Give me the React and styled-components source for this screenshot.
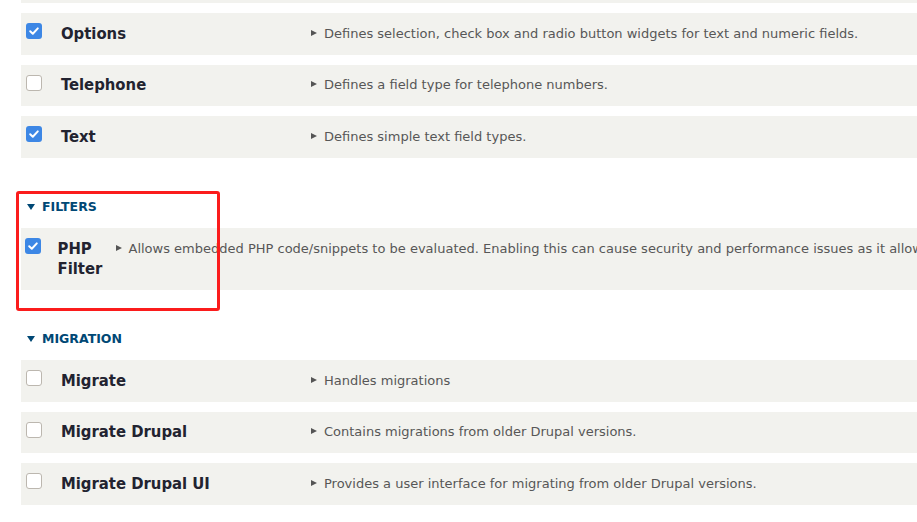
import React from 'react';
import styled, { createGlobalStyle } from 'styled-components';

const GlobalStyle = createGlobalStyle`
  html, body {
    margin: 0;
    padding: 0;
    background: #fff;
  }
  body {
    font-family: "DejaVu Sans", Verdana, sans-serif;
    overflow: hidden;
  }
`;

const Page = styled.div`
  position: relative;
  height: 522px;
  overflow: hidden;
`;

// list is scrolled: the row above "Options" only shows its last 2px
const List = styled.div`
  display: flex;
  flex-direction: column;
  margin-top: -38.5px;
  padding-left: 21px;
`;

const Section = styled.section`
  margin-top: 29px;
`;

const Heading = styled.h3`
  display: flex;
  align-items: center;
  margin: 0 0 11.5px;
  padding-left: 6px;
  font-size: 12.5px;
  line-height: 20px;
  font-weight: bold;
  text-transform: uppercase;
  color: #004875;

  &::before {
    content: '';
    width: 0;
    height: 0;
    margin-right: 7px;
    border-top: 6px solid #004875;
    border-left: 4px solid transparent;
    border-right: 4px solid transparent;
  }
`;

const Row = styled.div`
  display: flex;
  align-items: flex-start;
  box-sizing: border-box;
  min-height: 41.5px;
  background: #f2f2ee;
  padding: 10.5px 0 11px ${p => (p.$compact ? '4px' : '5px')};
  margin-bottom: 10px;
  overflow: hidden;
`;

const Box = styled.span`
  flex: none;
  box-sizing: border-box;
  width: 16px;
  height: 16px;
  margin-top: -0.5px;
  border-radius: 3px;
  display: flex;
  align-items: center;
  justify-content: center;
  background: ${p => (p.$checked ? '#3d87e5' : '#fff')};
  border: ${p => (p.$checked ? 'none' : '1px solid #bcb7af')};
`;

const Name = styled.div`
  flex: none;
  width: ${p => (p.$compact ? '58px' : '250px')};
  margin-left: ${p => (p.$compact ? '16.5px' : '19px')};
  font-family: "DejaVu Sans Condensed", "DejaVu Sans", sans-serif;
  font-size: 16.5px;
  line-height: 20px;
  font-weight: bold;
  color: #222330;
`;

const Desc = styled.div`
  display: flex;
  align-items: flex-start;
  font-size: 13px;
  line-height: 20px;
  color: #575757;
  white-space: nowrap;
`;

const Arrow = styled.span`
  flex: none;
  width: 0;
  height: 0;
  margin: 6px 7px 0 0;
  border-left: 6px solid #555;
  border-top: 3.5px solid transparent;
  border-bottom: 3.5px solid transparent;
`;

const Callout = styled.div`
  position: absolute;
  left: 16px;
  top: 191px;
  width: 204px;
  height: 120px;
  box-sizing: border-box;
  border: 3px solid #fb1c1c;
  border-radius: 3px;
  pointer-events: none;
`;

const Checkbox = ({ checked }) => (
  <Box $checked={checked}>
    {checked && (
      <svg width="12" height="12" viewBox="0 0 12 12">
        <path d="M2.2 6.2 L4.8 8.7 L9.8 3.4" fill="none" stroke="#fff" strokeWidth="2" strokeLinecap="round" strokeLinejoin="round" />
      </svg>
    )}
  </Box>
);

const Module = ({ name, desc, checked, compact }) => (
  <Row $compact={compact}>
    <Checkbox checked={checked} />
    <Name $compact={compact}>{name}</Name>
    <Desc>
      <Arrow />
      <span>{desc}</span>
    </Desc>
  </Row>
);

const fieldModules = [
  { name: 'Options', desc: 'Defines selection, check box and radio button widgets for text and numeric fields.', checked: true },
  { name: 'Telephone', desc: 'Defines a field type for telephone numbers.', checked: false },
  { name: 'Text', desc: 'Defines simple text field types.', checked: true },
];

const migrationModules = [
  { name: 'Migrate', desc: 'Handles migrations', checked: false },
  { name: 'Migrate Drupal', desc: 'Contains migrations from older Drupal versions.', checked: false },
  { name: 'Migrate Drupal UI', desc: 'Provides a user interface for migrating from older Drupal versions.', checked: false },
];

export default function App() {
  return (
    <>
      <GlobalStyle />
      <Page>
        <List>
          <Row aria-hidden />
          {fieldModules.map(m => (
            <Module key={m.name} {...m} />
          ))}
          <Section>
            <Heading>Filters</Heading>
            <Module
              compact
              checked
              name="PHP Filter"
              desc="Allows embedded PHP code/snippets to be evaluated. Enabling this can cause security and performance issues as it allows PHP to be executed while the site is running."
            />
          </Section>
          <Section>
            <Heading>Migration</Heading>
            {migrationModules.map(m => (
              <Module key={m.name} {...m} />
            ))}
          </Section>
        </List>
        <Callout />
      </Page>
    </>
  );
}
